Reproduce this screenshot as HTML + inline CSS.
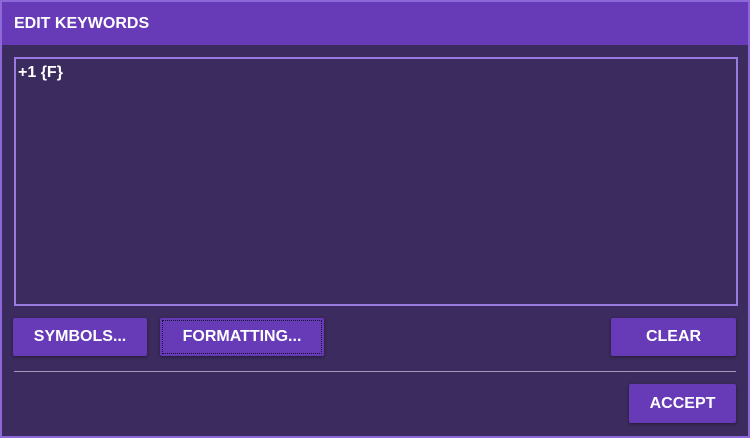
<!DOCTYPE html>
<html><head><style>
body{margin:0;width:750px;height:438px;overflow:hidden;background:#3c2b5e;font-family:"Liberation Sans",sans-serif;}
.win{position:absolute;left:0;top:0;width:746px;height:434px;border:2px solid #8d68d8;background:#3c2b5e;}
.title{position:absolute;left:0;top:0;width:746px;height:43px;background:#673ab7;color:#fff;font-weight:bold;font-size:16px;line-height:44px;padding-left:12px;box-sizing:border-box;}
.ta{position:absolute;left:12px;top:55px;width:724px;height:249px;border:2px solid #9a7be0;color:#fff;font-weight:bold;font-size:16px;padding:5px 2px;box-sizing:border-box;}
.btn{position:absolute;background:#673ab7;color:#fff;font-weight:bold;font-size:16px;text-align:center;border-radius:2px;box-shadow:0 1px 3px rgba(0,0,0,.4);}
.line{position:absolute;left:12px;top:369px;width:722px;height:1px;background:#a79ab8;}
</style></head><body>
<div class="win">
<div class="title">EDIT KEYWORDS</div>
<div class="ta">+1 {F}</div>
<div class="btn" style="left:11px;top:316px;width:134px;height:38px;line-height:38px;">SYMBOLS...</div>
<div class="btn" style="left:158px;top:316px;width:164px;height:38px;line-height:38px;"><div style="position:absolute;left:2px;top:2px;right:2px;bottom:2px;border:1px dotted #1a1030;"></div>FORMATTING...</div>
<div class="btn" style="left:609px;top:316px;width:125px;height:38px;line-height:38px;">CLEAR</div>
<div class="line"></div>
<div class="btn" style="left:627px;top:382px;width:107px;height:39px;line-height:39px;">ACCEPT</div>
</div>
</body></html>
